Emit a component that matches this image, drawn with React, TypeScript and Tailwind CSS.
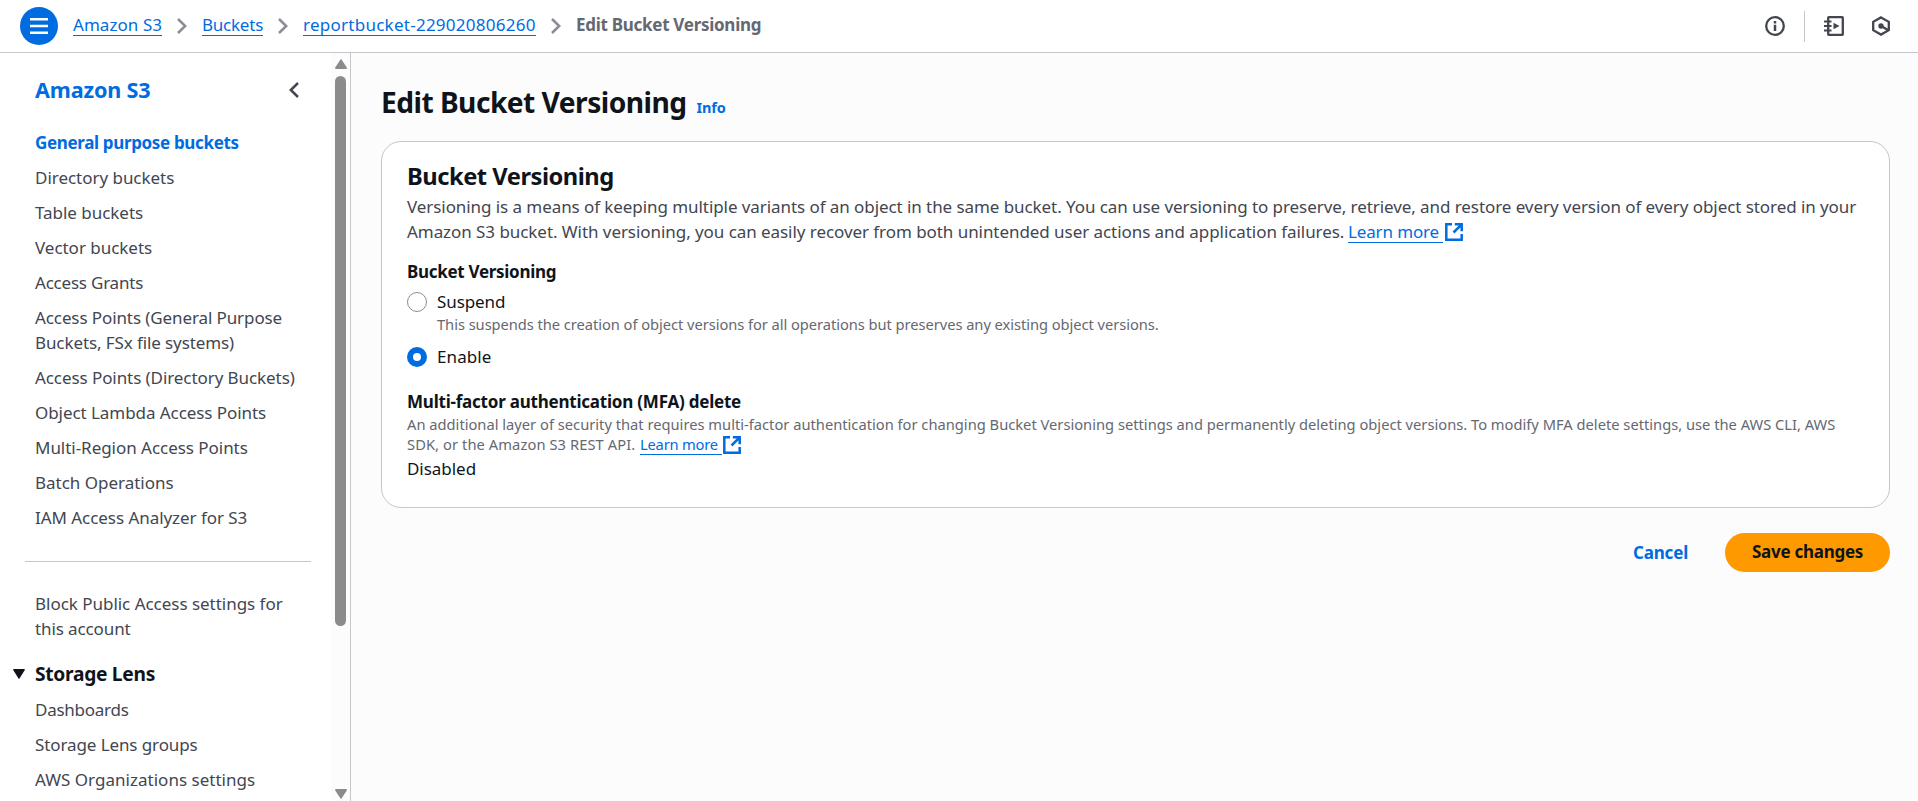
import React from 'react';

type NavEntry = { lines: string[]; className: string };

const primaryNav: NavEntry[] = [
  { lines: ['General purpose buckets'], className: 'font-bold tracking-[-0.346px] text-[#006ce0]' },
  { lines: ['Directory buckets'], className: 'tracking-[-0.03px]' },
  { lines: ['Table buckets'], className: 'tracking-[-0.035px]' },
  { lines: ['Vector buckets'], className: 'tracking-[-0.03px]' },
  { lines: ['Access Grants'], className: 'tracking-[-0.213px]' },
  { lines: ['Access Points (General Purpose', 'Buckets, FSx file systems)'], className: 'tracking-[-0.1px]' },
  { lines: ['Access Points (Directory Buckets)'], className: 'tracking-[-0.077px]' },
  { lines: ['Object Lambda Access Points'], className: 'tracking-[-0.062px]' },
  { lines: ['Multi-Region Access Points'], className: 'tracking-[-0.035px]' },
  { lines: ['Batch Operations'], className: 'tracking-[-0.01px]' },
  { lines: ['IAM Access Analyzer for S3'], className: 'tracking-[-0.05px]' },
];

const lensNav: NavEntry[] = [
  { lines: ['Dashboards'], className: 'tracking-[-0.25px]' },
  { lines: ['Storage Lens groups'], className: 'tracking-[-0.1px]' },
  { lines: ['AWS Organizations settings'], className: 'tracking-[0.02px]' },
];

function NavList({ entries }: { entries: NavEntry[] }) {
  return (
    <ul className="flex flex-col gap-[10px] whitespace-nowrap">
      {entries.map((entry) => (
        <li key={entry.lines[0]} className={entry.className}>
          {entry.lines.map((line) => (
            <span key={line} className="block">{line}</span>
          ))}
        </li>
      ))}
    </ul>
  );
}

function Chevron() {
  return (
    <svg className="size-5 shrink-0" viewBox="0 0 20 20" fill="none" stroke="#8c8c94" strokeWidth="2.5">
      <path d="M6 3l7.2 7-7.2 7" />
    </svg>
  );
}

function ExternalIcon({ className }: { className: string }) {
  return (
    <svg className={className} viewBox="0 0 18 18" fill="none" stroke="#006ce0" strokeWidth="2.5">
      <path d="M7 1.300H1.300v15.400h15.400V11" />
      <path d="M9.800 1.300h6.900v6.900M16.200 1.800L8.500 9.500" />
    </svg>
  );
}

function Header() {
  const link = 'border-b border-[#006ce0] text-[#006ce0] h-6 mb-[4px]';
  return (
    <header className="flex h-[53px] shrink-0 items-center border-b border-[#c6c6cd] bg-white pl-5 pr-[27px]">
      <button className="flex size-[38px] items-center justify-center rounded-full bg-[#006ce0]">
        <svg className="size-5" viewBox="0 0 20 20" stroke="#fff" strokeWidth="2.4">
          <path d="M1 3.200h18M1 10h18M1 16.800h18" />
        </svg>
      </button>
      <nav className="ml-[15px] flex items-center whitespace-nowrap">
        <a className={`${link} w-[89px] tracking-[0.057px]`}>Amazon S3</a>
        <span className="mx-[10px] flex"><Chevron /></span>
        <a className={`${link} w-[61px] tracking-[-0.23px]`}>Buckets</a>
        <span className="mx-[10px] flex"><Chevron /></span>
        <a className={`${link} w-[233px] tracking-[0.257px]`}>reportbucket-229020806260</a>
        <span className="mx-[10px] flex"><Chevron /></span>
        <span className="mb-[4px] h-6 font-bold tracking-[-0.283px] text-[#656871]">
          Edit Bucket Versioning
        </span>
      </nav>
      <div className="ml-auto flex items-center">
        <svg className="size-5" viewBox="0 0 20 20" fill="none" stroke="#424650">
          <circle cx="10" cy="10" r="8.8" strokeWidth="2.3" />
          <path d="M10 8.800V15M10 5v2.400" strokeWidth="2.5" />
        </svg>
        <div className="ml-[19px] h-[31px] w-px bg-[#c6c6cd]" />
        <svg className="ml-[19px] size-5" viewBox="0 0 20 20" fill="none" stroke="#424650" strokeWidth="2.3">
          <rect x="4.200" y="1.200" width="14.600" height="17.600" rx=".6" />
          <path d="M0 5.400h7.500M0 10h7.500M0 14.600h7.500" strokeWidth="2" />
          <path d="M9.500 6.800v6.400l6-3.200z" fill="#424650" stroke="none" />
        </svg>
        <svg className="ml-[27px] size-5" viewBox="0 0 20 20" fill="none" stroke="#424650" strokeWidth="2.3">
          <path d="M10 1.400l7.800 4.400v8.400L10 18.600l-7.800-4.400V5.800z" />
          <circle cx="10" cy="10" r="2.7" fill="#424650" stroke="none" />
          <path d="M10 10l7.400 4.200" />
        </svg>
      </div>
    </header>
  );
}

function Sidebar() {
  return (
    <aside className="flex w-[351px] shrink-0 border-r border-[#c6c6cd] bg-white">
      <div className="w-[331px] pl-[35px] text-[#424650]">
        <div className="flex items-center justify-between pr-[27px] pt-[22px]">
          <h2 className="text-[21.6px] font-bold leading-[30px] tracking-[-0.164px] text-[#006ce0]">Amazon S3</h2>
          <svg className="size-5" viewBox="0 0 20 20" fill="none" stroke="#424650" strokeWidth="2.5">
            <path d="M14 3l-7.200 7 7.200 7" />
          </svg>
        </div>
        <div className="mt-[25px]">
          <NavList entries={primaryNav} />
        </div>
        <hr className="-ml-[10px] mt-[31px] w-[286px] border-[#c6c6cd]" />
        <div className="mt-[29px] whitespace-nowrap">
          <span className="block tracking-[-0.026px]">Block Public Access settings for</span>
          <span className="block tracking-[-0.109px]">this account</span>
        </div>
        <div className="-ml-[22px] mt-[20px] flex items-center">
          <svg className="h-[10px] w-3" viewBox="0 0 12 10" fill="#0f141a">
            <path d="M.8 0h10.400q1 0 .6.900L6.500 9.500q-.5.600-1 0L.2.900Q-.2 0 .8 0z" />
          </svg>
          <h3 className="ml-[10px] text-[19.2px] font-bold tracking-[-0.286px] text-[#0f141a]">Storage Lens</h3>
        </div>
        <div className="mt-[11px]">
          <NavList entries={lensNav} />
        </div>
      </div>
      <div className="flex w-[19px] flex-col items-center bg-[#fcfcfc] pt-[6px]">
        <svg className="h-[10px] w-3 shrink-0" viewBox="0 0 12 10" fill="#8b8b8b">
          <path d="M6.500.4L11.800 8.600q.4 1.400-.8 1.400H1Q-.2 10 .2 8.600L5.500.4q.5-.6 1 0z" />
        </svg>
        <div className="mt-[7px] h-[550px] w-[11px] shrink-0 rounded-full bg-[#8b8b8b]" />
        <svg className="mb-[2px] mt-auto h-[10px] w-3 shrink-0" viewBox="0 0 12 10" fill="#8b8b8b">
          <path d="M6.500 9.600L11.800 1.400Q12.200 0 11 0H1Q-.2 0 .2 1.400l5.300 8.200q.5.600 1 0z" />
        </svg>
      </div>
    </aside>
  );
}

function VersioningCard() {
  return (
    <section className="mt-[20px] h-[367px] w-[1509px] whitespace-nowrap rounded-[20px] border border-[#c6c6cd] bg-white px-[25px] pt-[19px]">
      <h2 className="text-[23.7px] font-bold leading-[30px] tracking-[-0.48px] text-[#0f141a]">Bucket Versioning</h2>
      <div className="mt-[3px] text-[#424650]">
        <p className="tracking-[-0.071px]">
          Versioning is a means of keeping multiple variants of an object in the same bucket. You can use versioning to preserve, retrieve, and restore every version of every object stored in your
        </p>
        <p className="flex">
          <span className="w-[941px] tracking-[-0.058px]">
            Amazon S3 bucket. With versioning, you can easily recover from both unintended user actions and application failures.
          </span>
          <a className="h-6 w-[95px] border-b border-[#006ce0] tracking-[-0.136px] text-[#006ce0]">Learn more</a>
          <ExternalIcon className="ml-[2px] mt-[4px] size-[18px]" />
        </p>
      </div>
      <h3 className="mt-[15px] font-bold tracking-[-0.3px] text-[#0f141a]">Bucket Versioning</h3>
      <div className="mt-[5px] flex gap-[10px] text-[#0f141a]">
        <span className="mt-[3px] size-5 rounded-full border border-[#8c8c94] bg-white" />
        <div>
          <div className="tracking-[-0.1px]">Suspend</div>
          <p className="text-[14.7px] leading-5 tracking-[-0.052px] text-[#656871]">
            This suspends the creation of object versions for all operations but preserves any existing object versions.
          </p>
        </div>
      </div>
      <div className="mt-[10px] flex gap-[10px] text-[#0f141a]">
        <span className="mt-[3px] flex size-5 items-center justify-center rounded-full bg-[#006ce0]">
          <span className="size-2 rounded-full bg-white" />
        </span>
        <span className="tracking-[0.1px]">Enable</span>
      </div>
      <h3 className="mt-[20px] font-bold tracking-[-0.22px] text-[#0f141a]">Multi-factor authentication (MFA) delete</h3>
      <div className="text-[14.7px] leading-5 text-[#656871]">
        <p className="tracking-[0.002px]">
          An additional layer of security that requires multi-factor authentication for changing Bucket Versioning settings and permanently deleting object versions. To modify MFA delete settings, use the AWS CLI, AWS
        </p>
        <p className="flex">
          <span className="w-[233px] tracking-[0.08px]">SDK, or the Amazon S3 REST API.</span>
          <a className="h-[21px] w-[82px] border-b border-[#006ce0] tracking-[-0.19px] text-[#006ce0]">Learn more</a>
          <ExternalIcon className="ml-[1px] mt-[2px] size-[18px]" />
        </p>
      </div>
      <p className="mt-px tracking-[-0.038px] text-[#0f141a]">Disabled</p>
    </section>
  );
}

export default function App() {
  return (
    <div className="flex h-[801px] flex-col overflow-hidden bg-[#fcfcfc] font-['Noto_Sans',sans-serif] text-[17px] leading-[25px]">
      <Header />
      <div className="flex min-h-0 flex-1">
        <Sidebar />
        <main className="whitespace-nowrap pl-[30px] pt-[30px]">
          <div className="flex h-[38px] items-baseline">
            <h1 className="text-[28.2px] font-bold leading-[38px] tracking-[-0.54px] text-[#0f141a]">Edit Bucket Versioning</h1>
            <a className="ml-[10px] text-[14.5px] font-bold leading-5 tracking-[-0.1px] text-[#006ce0]">Info</a>
          </div>
          <VersioningCard />
          <div className="mt-[25px] flex items-center justify-end font-bold">
            <button className="pb-px tracking-[-0.2px] text-[#006ce0]">Cancel</button>
            <button className="ml-[37px] h-[39px] w-[165px] rounded-full bg-[#ff9900] pb-[2px] tracking-[-0.268px] text-[#0f141a]">Save changes</button>
          </div>
        </main>
      </div>
    </div>
  );
}
